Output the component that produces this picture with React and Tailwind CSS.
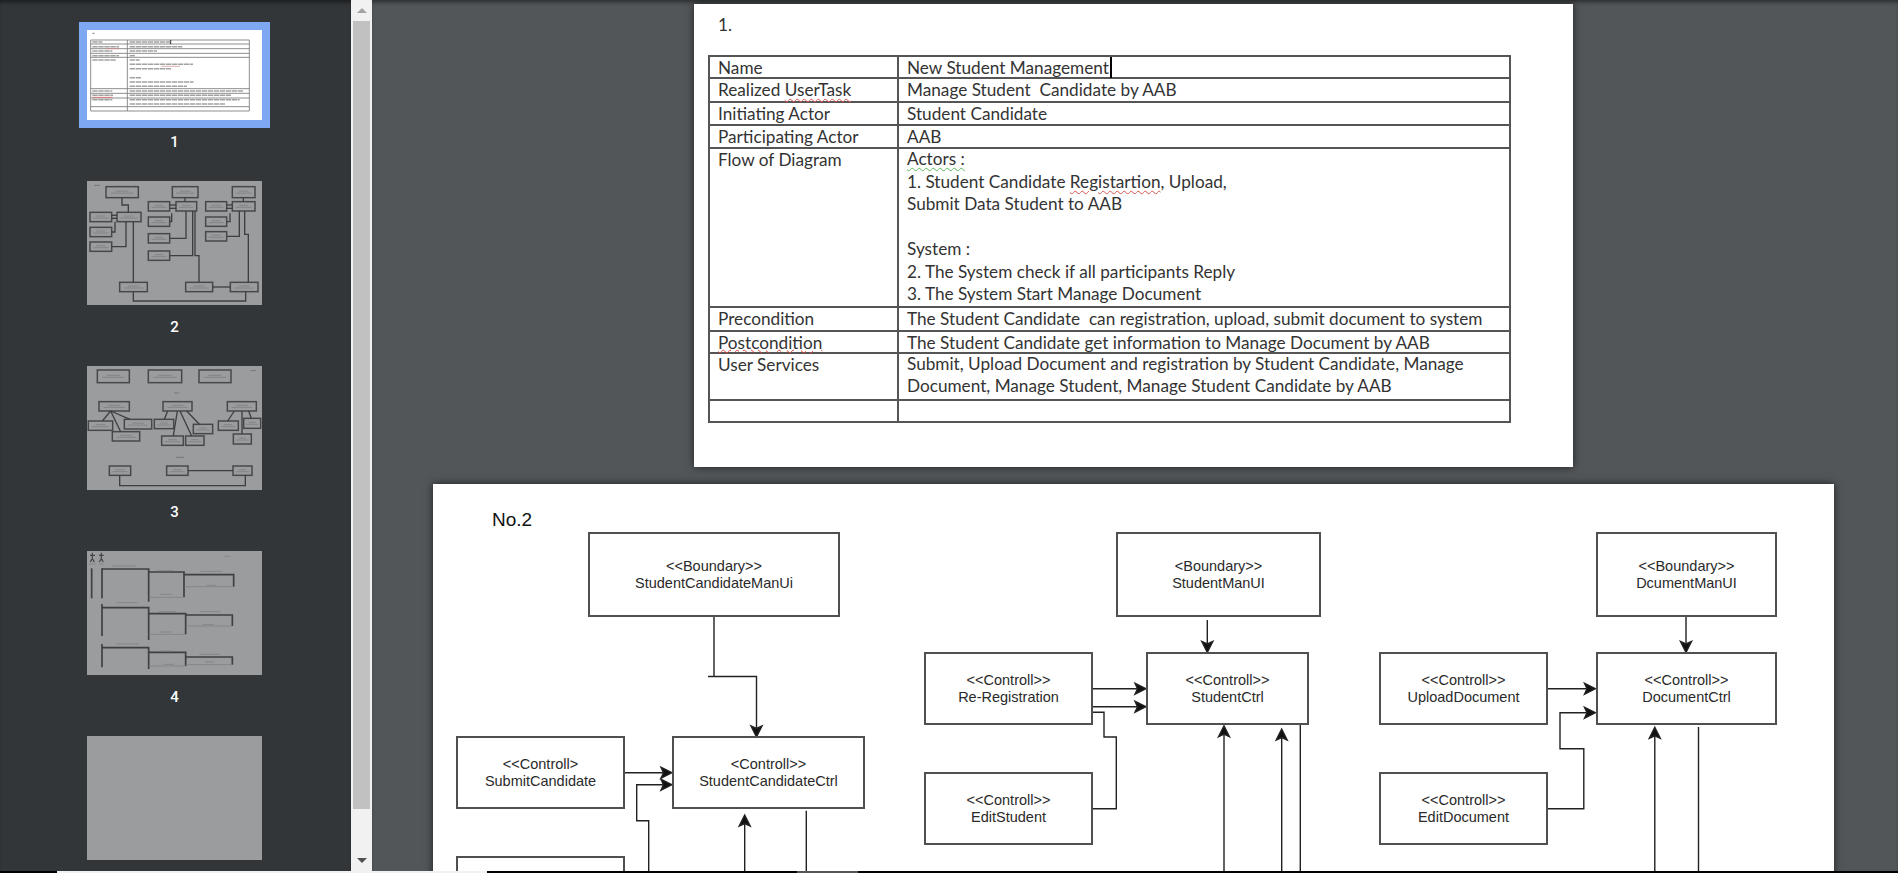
import React from "react";

// thumbnail drawings are in zoomed-up units, the viewBox squeezes them into 175px
const thumb2Boxes = [
  [108, 50, 97, 33], [60, 127, 65, 28], [141, 127, 72, 28], [60, 172, 65, 28], [60, 216, 65, 28],
  [307, 50, 77, 33], [235, 95, 64, 28], [318, 95, 62, 28], [235, 141, 64, 28], [235, 191, 64, 28], [235, 243, 64, 28],
  [487, 50, 68, 33], [407, 95, 63, 28], [487, 95, 68, 28], [407, 141, 63, 28], [407, 185, 63, 28],
  [149, 337, 83, 28], [347, 337, 81, 28], [481, 337, 83, 28],
];
const thumb2Lines = [
  "M156 83V105H175V127", "M125 136H141", "M125 145H141", "M125 186H135V155", "M125 230H168V155",
  "M190 155V337", "M190 365V393H527V365", "M428 351H481",
  "M345 83V95", "M299 105H318", "M299 115H318", "M299 155H305V130", "M299 205H348V123", "M299 257H368V123", "M375 123V257H387V337",
  "M520 83V95", "M470 105H487", "M470 115H487", "M470 155H480V130", "M470 199H508V123", "M524 123V193H535V337",
];
const thumb3Boxes = [
  [82, 45, 96, 38], [235, 45, 100, 38], [387, 45, 96, 38], [87, 140, 91, 28], [279, 140, 87, 28], [472, 140, 87, 28],
  [55, 198, 73, 28], [163, 193, 82, 29], [127, 230, 82, 28], [253, 193, 58, 28], [370, 208, 58, 28], [275, 243, 65, 28],
  [347, 243, 55, 28], [445, 198, 60, 28], [521, 190, 51, 30], [490, 237, 54, 30], [118, 333, 64, 28], [290, 333, 64, 28], [489, 333, 57, 28],
];
const thumb3Lines = [
  "M122 168L97 198", "M122 168L152 230", "M122 168L180 193", "M293 168L283 193", "M322 168L310 243", "M330 168L365 243",
  "M350 168L388 208", "M493 168L473 198", "M516 168V237", "M536 168L544 190", "M354 347H489", "M149 361V392H526V361",
];
const thumb4Thick = [
  "M65 85V175", "M96 85V175", "M96 87H236V185", "M236 96H342V172", "M342 104H491V140",
  "M96 192V288", "M96 203H236V300", "M236 221H347V283", "M347 225H487V258",
  "M96 312V382", "M96 323H236V387", "M236 337H347V378", "M347 351H487V374",
];
const thumb4Thin = [
  "M343 140H491", "M236 172H342", "M347 258H487", "M236 283H347", "M347 374H487", "M236 378H347",
  "M125 78H198", "M260 92H312", "M392 94H455", "M410 136H437", "M270 163H305", "M140 188H202", "M265 215H318",
  "M390 215H452", "M398 254H432", "M270 276H306", "M137 312H207", "M268 333H310", "M388 343H450", "M405 366H433", "M280 373H312", "M463 49H482",
];
const thumb1Rows = [120, 132, 146, 160, 172, 266, 280, 294, 320, 333];
const thumb1Text = [
  [277, 126, 30], [389, 126, 122], [277, 140, 80], [389, 140, 158], [277, 153, 60], [389, 153, 82], [277, 167, 80], [389, 167, 18],
  [277, 180, 72], [389, 180, 30], [389, 193, 190], [389, 206, 125], [389, 233, 35], [389, 246, 192], [389, 259, 172],
  [277, 273, 60], [389, 273, 342], [277, 286, 62], [389, 286, 306], [277, 299, 60], [389, 299, 330], [389, 312, 288],
];

function ThumbBoxes({ boxes }) {
  return boxes.map(([x, y, w, h], i) => (
    <g key={i}>
      <rect x={x} y={y} width={w} height={h} fill="none" stroke="#47484a" strokeWidth="4.5" />
      <path d={`M${x + w * 0.3} ${y + h / 2 - 3}H${x + w * 0.7}M${x + w * 0.15} ${y + h / 2 + 3}H${x + w * 0.85}`} stroke="#77787a" strokeWidth="2" />
    </g>
  ));
}

function Thumb({ label, box, active, children }) {
  return (
    <div className="flex flex-col items-center">
      <div className={`w-[175px] ${active ? "h-[90px] bg-white ring-8 ring-[#7ea9f2]" : "h-[124px] bg-[#9a9c9e]"} ${box}`}>{children}</div>
      <div className="h-[61px] pt-[13px] text-[15px] leading-[18px] font-medium text-white font-['Roboto',sans-serif]">{label}</div>
    </div>
  );
}

function Arrow({ x, y, dir }) {
  const angle = { down: 0, right: -90, up: 180 }[dir];
  return <polygon points="0,0 -5.5,-11 0,-8.5 5.5,-11" fill="#111" transform={`translate(${x} ${y}) rotate(${angle})`} />;
}

function Box({ pos, children }) {
  return (
    <div className={`absolute flex flex-col items-center justify-center border-2 border-[#505050] text-[14.5px] leading-[16.5px] text-[#2a2a2a] ${pos}`}>
      {children}
    </div>
  );
}

function Row({ h, name, children, nameExtra }) {
  return (
    <tr className={h}>
      <td className="w-[189px] border-2 border-[#555] pl-[8px] align-top">{nameExtra || name}</td>
      <td className="border-2 border-[#555] pl-[8px] align-top">{children}</td>
    </tr>
  );
}

const squiggleRed = "underline decoration-wavy decoration-[#d9534f] decoration-1 underline-offset-[2px]";
const squiggleTight = "underline decoration-wavy decoration-[#e0403a] decoration-1 underline-offset-[0px]";
const squiggleGreen = "underline decoration-wavy decoration-[#5cb85c] decoration-1 underline-offset-[2px]";

function PageOne() {
  return (
    <div className="h-[463px] w-[879px] shrink-0 bg-white pl-[14px] shadow-[0_0_8px_rgba(0,0,0,0.6)] font-['Lato',sans-serif] text-[17.2px] leading-[19px] text-[#333]">
      <p className="h-[51px] pl-[10px] pt-[11px]">1.</p>
      <table className="w-[803px] table-fixed border-collapse">
        <tbody className="[&_td]:pt-[1px]">
          <Row h="h-[22px]" name="Name">
            <span className="border-r-2 border-black pr-[1px]">New Student Management</span>
          </Row>
          <Row h="h-[24px]" nameExtra={<>Realized <span className={squiggleRed}>UserTask</span></>}>Manage Student&nbsp; Candidate by AAB</Row>
          <Row h="h-[23px]" name="Initiating Actor">Student Candidate</Row>
          <Row h="h-[23px]" name="Participating Actor">AAB</Row>
          <Row h="h-[158px]" name="Flow of Diagram">
            <div className="-mt-[2px] leading-[22.5px]">
              <span className={squiggleGreen}>Actors :</span>
              <br />1. Student Candidate <span className={squiggleRed}>Registartion</span>, Upload,
              <br />Submit Data Student to AAB
              <br />&nbsp;
              <br />System :
              <br />2. The System check if all participants Reply
              <br />3. The System Start Manage Document
            </div>
          </Row>
          <Row h="h-[24px]" name="Precondition">The Student Candidate&nbsp; can registration, upload, submit document to system</Row>
          <Row h="h-[22px]" nameExtra={<span className={squiggleTight}>Postcondition</span>}>The Student Candidate get information to Manage Document by AAB</Row>
          <Row h="h-[47px]" name="User Services">
            <div className="-mt-[2px] leading-[22.3px]">
              Submit, Upload Document and registration by Student Candidate, Manage
              <br />Document, Manage Student, Manage Student Candidate by AAB
            </div>
          </Row>
          <Row h="h-[22px]" name="" />
        </tbody>
      </table>
    </div>
  );
}

function PageTwo() {
  return (
    <div className="relative h-[420px] w-[1401px] shrink-0 bg-white shadow-[0_0_8px_rgba(0,0,0,0.6)] font-['Liberation_Sans',Arial,sans-serif]">
      <p className="absolute left-[59px] top-[25px] text-[19px] leading-[22px] text-[#111]">No.2</p>

      {/* connectors, coordinates are the screen ones */}
      <svg className="absolute inset-0" width="1401" height="420" viewBox="433 484 1401 420" fill="none" stroke="#222" strokeWidth="1.4">
        <path d="M714 617V676.5M708 676.5H756.5V730" />
        <Arrow x={756.5} y={737} dir="down" />
        <path d="M625 772.7H665M665 784.7H636.7V820.7H648.7V873" />
        <Arrow x={672} y={772.7} dir="right" />
        <Arrow x={672} y={784.7} dir="right" />
        <path d="M744.7 873V824M806.3 810.7V873" />
        <Arrow x={744.7} y={815} dir="up" />

        <path d="M1207.3 620V645M1092.7 688.7H1140M1092.7 706.7H1140M1092.7 712.3H1104V737H1116.3V808.7H1092.7" />
        <Arrow x={1207.3} y={652.5} dir="down" />
        <Arrow x={1146} y={688.7} dir="right" />
        <Arrow x={1146} y={706.7} dir="right" />
        <path d="M1224 873V734M1281.7 873V738M1300.3 725V873" />
        <Arrow x={1224} y={725.7} dir="up" />
        <Arrow x={1281.7} y={729} dir="up" />

        <path d="M1686 617V645M1548 688.7H1590M1590 712.7H1560V748.7H1583.8V808.7H1548" />
        <Arrow x={1686} y={652.5} dir="down" />
        <Arrow x={1595.5} y={688.7} dir="right" />
        <Arrow x={1595.5} y={712.7} dir="right" />
        <path d="M1654.8 873V736M1698.5 727V873" />
        <Arrow x={1654.8} y={727.3} dir="up" />
      </svg>

      <Box pos="left-[155px] top-[48px] h-[85px] w-[252px]"><span>&lt;&lt;Boundary&gt;&gt;</span><span>StudentCandidateManUi</span></Box>
      <Box pos="left-[23px] top-[252px] h-[73px] w-[169px]"><span>&lt;&lt;Controll&gt;</span><span>SubmitCandidate</span></Box>
      <Box pos="left-[239px] top-[252px] h-[73px] w-[193px]"><span>&lt;Controll&gt;&gt;</span><span>StudentCandidateCtrl</span></Box>
      <Box pos="left-[23px] top-[372px] h-[73px] w-[169px]" />

      <Box pos="left-[683px] top-[48px] h-[85px] w-[205px]"><span>&lt;Boundary&gt;&gt;</span><span>StudentManUI</span></Box>
      <Box pos="left-[491px] top-[168px] h-[73px] w-[169px]"><span>&lt;&lt;Controll&gt;&gt;</span><span>Re-Registration</span></Box>
      <Box pos="left-[713px] top-[168px] h-[73px] w-[163px]"><span>&lt;&lt;Controll&gt;&gt;</span><span>StudentCtrl</span></Box>
      <Box pos="left-[491px] top-[288px] h-[73px] w-[169px]"><span>&lt;&lt;Controll&gt;&gt;</span><span>EditStudent</span></Box>

      <Box pos="left-[1163px] top-[48px] h-[85px] w-[181px]"><span>&lt;&lt;Boundary&gt;&gt;</span><span>DcumentManUI</span></Box>
      <Box pos="left-[946px] top-[168px] h-[73px] w-[169px]"><span>&lt;&lt;Controll&gt;&gt;</span><span>UploadDocument</span></Box>
      <Box pos="left-[1163px] top-[168px] h-[73px] w-[181px]"><span>&lt;&lt;Controll&gt;&gt;</span><span>DocumentCtrl</span></Box>
      <Box pos="left-[946px] top-[288px] h-[73px] w-[169px]"><span>&lt;&lt;Controll&gt;&gt;</span><span>EditDocument</span></Box>
    </div>
  );
}

export default function App() {
  return (
    <div className="flex h-[873px] w-[1898px] flex-col overflow-hidden bg-[#525659]">
      <div className="flex h-[871px] min-h-0">
        {/* thumbnails */}
        <aside className="flex w-[351px] shrink-0 flex-col overflow-hidden bg-[#323639] pr-[2px] pt-[30px] shadow-[inset_0_4px_4px_-2px_rgba(0,0,0,0.5)]">
          <Thumb label="1" active>
            <svg className="blur-[0.3px]" width="175" height="90" viewBox="261 90 525 270" fill="none">
              <path d="M277 100H284" stroke="#888" strokeWidth="3" />
              {thumb1Rows.map((y) => <path key={y} d={`M272 ${y}H748`} stroke="#777" strokeWidth="2.5" />)}
              <path d="M272 120V333M382 120V333M748 120V333" stroke="#777" strokeWidth="2.5" />
              <path d="M512 120V132" stroke="#222" strokeWidth="3" />
              {thumb1Text.map(([x, y, w], i) => <path key={i} d={`M${x} ${y}H${x + w}`} stroke="#a2a2a2" strokeWidth="4.5" strokeDasharray="16 2" />)}
              <path d="M277 292H338" stroke="#d9534f" strokeWidth="2" />
              <path d="M318 146H357M484 199H540" stroke="#d98a88" strokeWidth="2" />
            </svg>
          </Thumb>
          <Thumb label="2">
            <svg className="blur-[0.4px]" width="175" height="124" viewBox="51 33 525 372" fill="none">
              <path d="M72 46H90" stroke="#77787a" strokeWidth="3" />
              <ThumbBoxes boxes={thumb2Boxes} />
              {thumb2Lines.map((d) => <path key={d} d={d} stroke="#3e3f41" strokeWidth="4" />)}
            </svg>
          </Thumb>
          <Thumb label="3">
            <svg className="blur-[0.4px]" width="175" height="124" viewBox="51 33 525 372" fill="none">
              <path d="M542 47H558M312 114H328M318 307H342" stroke="#77787a" strokeWidth="3" />
              <ThumbBoxes boxes={thumb3Boxes} />
              {thumb3Lines.map((d) => <path key={d} d={d} stroke="#3e3f41" strokeWidth="4" />)}
            </svg>
          </Thumb>
          <Thumb label="4">
            <svg className="blur-[0.4px]" width="175" height="124" viewBox="51 33 525 372" fill="none">
              <path d="M67 38V56M60 46H75M67 56L61 66M67 56L73 66M94 38V56M87 46H101M94 56L88 66M94 56L100 66" stroke="#444" strokeWidth="3.5" />
              <path d="M57 72H77M88 72H100" stroke="#77787a" strokeWidth="2" />
              {thumb4Thick.map((d) => <path key={d} d={d} stroke="#3e3f41" strokeWidth="5" />)}
              {thumb4Thin.map((d) => <path key={d} d={d} stroke="#7b7c7e" strokeWidth="2" />)}
            </svg>
          </Thumb>
          <Thumb />
        </aside>

        {/* scrollbar of the thumbnail list */}
        <div className="flex w-[21px] shrink-0 flex-col items-center bg-[#f1f1f1]">
          <div className="flex h-[21px] items-center justify-center">
            <div className="h-0 w-0 border-x-[5px] border-b-[5px] border-x-transparent border-b-[#a3a3a3]" />
          </div>
          <div className="h-[788px] w-[17px] bg-[#c1c1c1]" />
          <div className="flex h-[62px] items-end justify-center pb-[8px]">
            <div className="h-0 w-0 border-x-[5px] border-t-[5px] border-x-transparent border-t-[#505050]" />
          </div>
        </div>

        {/* document */}
        <main className="flex min-w-0 flex-1 flex-col items-center gap-[17px] overflow-hidden pr-[3px] pt-[4px] shadow-[inset_0_4px_4px_-2px_rgba(0,0,0,0.5)]">
          <PageOne />
          <PageTwo />
        </main>
      </div>

      {/* bottom edge */}
      <div className="flex h-[2px] bg-black">
        <div className="w-[57px]" />
        <div className="w-[430px] bg-[#f1f1f1]" />
        <div className="w-[310px]" />
        <div className="w-[61px] bg-[#525659]" />
      </div>
    </div>
  );
}
